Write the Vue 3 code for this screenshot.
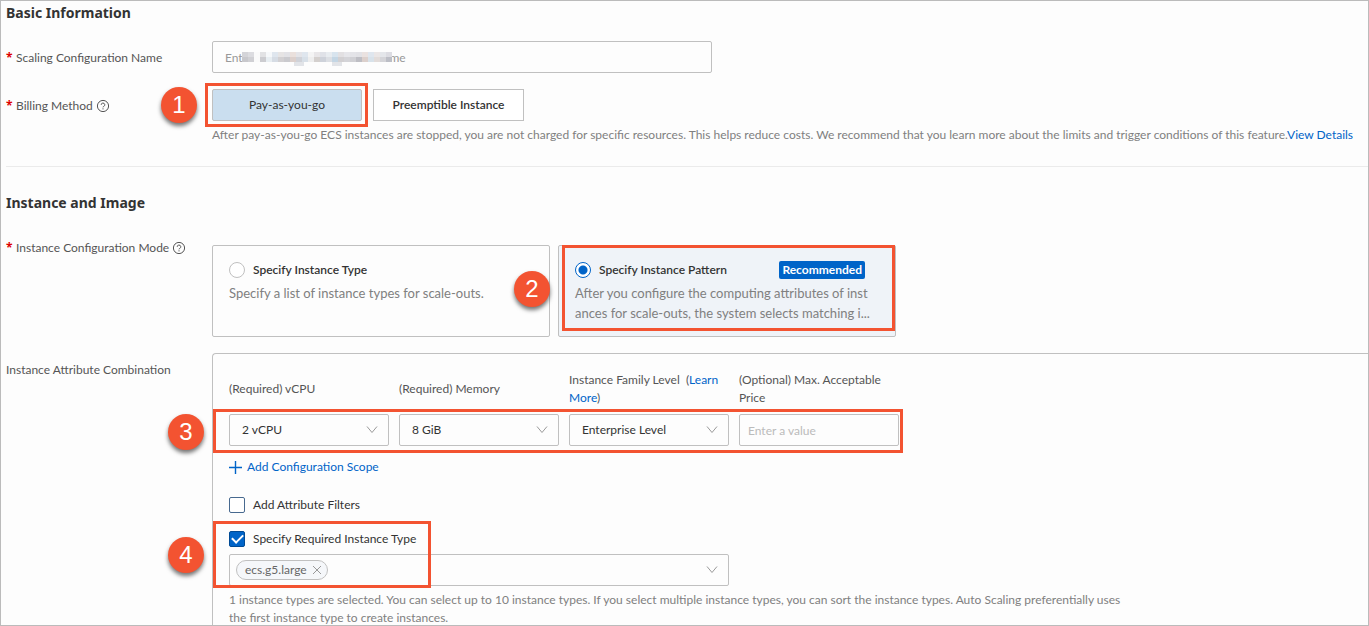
<script setup>
import { ref } from 'vue'

const name = ref('')
const mode = ref('pattern')
const vcpu = ref('2 vCPU')
const memory = ref('8 GiB')
const family = ref('Enterprise Level')
const price = ref('')
const filters = ref(false)
const required = ref(true)

const tones = [
  ['#d4d4d8', '#dcdce0', '#fafafa', '#e2e2e4', '#f6f8fa', '#dfe6ee', '#e6e4e4', '#e2e2e6', '#eae0dc', '#e4e4e8', '#dfe6ee', '#f4f4f4', '#e8e6e8', '#e0e2e8', '#e8ecf0', '#d8e4ee', '#e2e0e2', '#e6e6ea', '#e4e4e8', '#e2e2e6', '#eae2e0', '#dfe6ee', '#eae6e6', '#e4e6ea', '#dcdce2'],
  ['#c8c8cc', '#d0d0d4', '#fafafa', '#ccccd0', '#e8eef2', '#d6dce4', '#d2d0d2', '#cacace', '#dcd0cc', '#d0d2d8', '#d8e0e8', '#eeeeee', '#d4d0ce', '#ced2da', '#dcdfe4', '#c4d6e4', '#d2d0d2', '#d4d4d8', '#d0d0d4', '#bebec4', '#dcd0cc', '#d8e2ea', '#e2dcda', '#d4d4d8', '#bcbec6'],
]
const tails = [52, 57, 90, 95]
</script>

<template>
  <main class="page">
    <section class="section first">
      <h2>Basic Information</h2>

      <div class="row name-row">
        <label class="label" for="cfg-name"><span class="star">*</span>Scaling Configuration Name</label>
        <div class="name-wrap">
          <input id="cfg-name" v-model="name" class="box name-input" type="text" placeholder="Enter a scaling configuration name" />
          <svg class="mosaic" width="150" height="15" viewBox="0 0 150 15" aria-hidden="true">
            <rect width="150" height="15" fill="#fdfdfd" />
            <template v-for="(line, r) in tones" :key="r">
              <rect v-for="(c, i) in line" :key="i" :x="i * 6" :y="r * 5" width="6" height="5" :fill="c" />
            </template>
            <rect v-for="t in tails" :key="t" :x="t" y="10" width="5" height="4" fill="#e2e4e8" />
          </svg>
        </div>
      </div>

      <div class="row billing-row">
        <div class="label">
          <span class="star">*</span>Billing Method
          <svg class="help" width="12" height="12" viewBox="0 0 12 12" aria-hidden="true">
            <circle cx="6" cy="6" r="5.6" /><path d="M4.2 4.8a1.8 1.7 0 1 1 2.6 1.5Q6 6.7 6 7.3M6 8.3v1.1" />
          </svg>
        </div>
        <div>
          <div class="buttons">
            <div class="anchor">
              <button class="choice active" type="button">Pay-as-you-go</button>
              <span class="mark mark-1"></span><span class="badge badge-1">1</span>
            </div>
            <button class="choice" type="button">Preemptible Instance</button>
          </div>
          <p class="hint one-line">After pay-as-you-go ECS instances are stopped, you are not charged for specific resources. This helps reduce costs. We recommend that you learn more about the limits and trigger conditions of this feature.<a href="#">View Details</a></p>
        </div>
      </div>
    </section>

    <section class="section second">
      <h2>Instance and Image</h2>

      <div class="row cards-row">
        <div class="label mode-label">
          <span class="star">*</span>Instance Configuration Mode
          <svg class="help" width="12" height="12" viewBox="0 0 12 12" aria-hidden="true">
            <circle cx="6" cy="6" r="5.6" /><path d="M4.2 4.8a1.8 1.7 0 1 1 2.6 1.5Q6 6.7 6 7.3M6 8.3v1.1" />
          </svg>
        </div>
        <div class="cards">
          <div class="card">
            <label class="check"><input v-model="mode" type="radio" name="mode" value="type" /><span class="strong">Specify Instance Type</span></label>
            <p>Specify a list of instance types for scale-outs.</p>
            <span class="badge badge-2">2</span>
          </div>
          <div class="card selected">
            <div class="card-head">
              <label class="check"><input v-model="mode" type="radio" name="mode" value="pattern" /><span class="strong">Specify Instance Pattern</span></label>
              <span class="tag">Recommended</span>
            </div>
            <p>After you configure the computing attributes of inst<br />ances for scale-outs, the system selects matching i...</p>
            <span class="mark mark-2"></span>
          </div>
        </div>
      </div>

      <div class="row panel-row">
        <div class="label">Instance Attribute Combination</div>
        <div class="panel">
          <div class="fields">
            <div class="field">
              <label class="caption" for="vcpu">(Required) vCPU</label>
              <div class="select">
                <select id="vcpu" v-model="vcpu" class="box"><option>2 vCPU</option></select>
                <svg class="chev" width="12" height="8" viewBox="0 0 12 8" aria-hidden="true"><path d="M1 .5l5 6 5-6" /></svg>
              </div>
            </div>
            <div class="field">
              <label class="caption" for="memory">(Required) Memory</label>
              <div class="select">
                <select id="memory" v-model="memory" class="box"><option>8 GiB</option></select>
                <svg class="chev" width="12" height="8" viewBox="0 0 12 8" aria-hidden="true"><path d="M1 .5l5 6 5-6" /></svg>
              </div>
            </div>
            <div class="field">
              <div class="caption"><label for="family">Instance Family Level</label>&nbsp; (<a href="#">Learn More</a>)</div>
              <div class="select">
                <select id="family" v-model="family" class="box"><option>Enterprise Level</option></select>
                <svg class="chev" width="12" height="8" viewBox="0 0 12 8" aria-hidden="true"><path d="M1 .5l5 6 5-6" /></svg>
              </div>
            </div>
            <div class="field">
              <label class="caption" for="price">(Optional) Max. Acceptable Price</label>
              <input id="price" v-model="price" class="box price" type="text" placeholder="Enter a value" />
            </div>
            <span class="mark mark-3"></span><span class="badge badge-3">3</span>
          </div>

          <button class="add" type="button">
            <svg width="13" height="13" viewBox="0 0 13 13" aria-hidden="true"><path d="M6.5 0v13M0 6.5h13" /></svg>Add Configuration Scope
          </button>

          <label class="check filters"><input v-model="filters" type="checkbox" />Add Attribute Filters</label>

          <div class="required">
            <label class="check"><input v-model="required" type="checkbox" />Specify Required Instance Type</label>
            <div class="box multi">
              <span class="chip">ecs.g5.large
                <button type="button" aria-label="Remove ecs.g5.large">
                  <svg width="10" height="10" viewBox="0 0 10 10" aria-hidden="true"><path d="M1 1l8 8M9 1l-8 8" /></svg>
                </button>
              </span>
              <svg class="chev" width="12" height="8" viewBox="0 0 12 8" aria-hidden="true"><path d="M1 .5l5 6 5-6" /></svg>
            </div>
            <span class="mark mark-4"></span><span class="badge badge-4">4</span>
          </div>
          <p class="hint note">1 instance types are selected. You can select up to 10 instance types. If you select multiple instance types, you can sort the instance types. Auto Scaling preferentially uses the first instance type to create instances.</p>
        </div>
      </div>
    </section>
  </main>
</template>

<style>
body { background: #fdfdfd; }
</style>

<style scoped>
.page {
  box-sizing: border-box;
  height: 100vh;
  display: flex;
  flex-direction: column;
  overflow: hidden;
  padding-left: 5px;
  border: 1px solid #bbb;
  color: #555;
  font: 12px/18px Lato, "Open Sans", sans-serif;
}
.page * { box-sizing: border-box; }
h2 { margin: 0; color: #333; font: bold 14px/24px "Noto Sans", sans-serif; }
p { margin: 0; }
a { color: #0064c8; text-decoration: none; }
button, input, select { font: inherit; }
.first { flex: none; height: 166px; border-bottom: 1px solid #ebebeb; }
.second { flex: 1; display: flex; flex-direction: column; padding-top: 24px; }
.row { display: grid; grid-template-columns: 206px minmax(0, 1fr); }
.label { white-space: nowrap; line-height: 34px; }
.star { display: inline-block; width: 10px; color: #d00; font-family: "Open Sans", sans-serif; font-weight: bold; line-height: 18px; }
.help { margin-left: 1px; vertical-align: -2px; overflow: visible; fill: none; stroke: #555; stroke-width: 1; }
.box {
  width: 100%;
  height: 32px;
  border: 1px solid #c0c0c0;
  border-radius: 2px;
  background: transparent;
  color: #333;
  outline: 0;
}
.name-row { height: 32px; margin-top: 16px; }
.name-wrap { position: relative; max-width: 500px; }
.name-input { padding: 0 12px; }
.box::placeholder { color: #999; opacity: 1; }
.price::placeholder { color: #bbb; }
.mosaic { position: absolute; left: 30px; top: 11px; }
.billing-row { margin-top: 16px; }
.buttons { display: flex; gap: 11px; }
.anchor { position: relative; }
.choice { width: 151px; height: 32px; padding: 0; border: 1px solid #c0c0c0; background: #fff; color: #333; font-weight: 600; }
.choice.active { display: block; width: 150px; background: #cadeef; font-weight: 400; border-radius: 2px; }
.hint { color: #808080; }
.one-line { margin-top: 5px; white-space: nowrap; }
.mark { position: absolute; border: 3px solid #f35331; pointer-events: none; z-index: 1; }
.badge {
  position: absolute;
  width: 36px;
  height: 36px;
  border-radius: 50%;
  background: #f35331;
  box-shadow: 0 3px 4px rgba(0, 0, 0, .55);
  color: #fff;
  font: 24px/36px "Liberation Sans", Arial, sans-serif;
  text-align: center;
  z-index: 2;
}
.mark-1 { inset: -6px -6px -6px -7px; }
.badge-1 { left: -51px; top: -2px; }
.mode-label { align-self: start; line-height: 24px; margin-top: -9px; }
.cards-row { margin-top: 30px; }
.cards { display: flex; gap: 8px; }
.card { position: relative; width: 338px; height: 92px; padding: 15px 16px; border: 1px solid #c0c0c0; border-radius: 2px; }
.card.selected { background: #eff3f8; }
.card p { margin-top: 4px; color: #808080; font-size: 13px; line-height: 20px; white-space: nowrap; }
.card .strong { color: #333; font-weight: 600; }
.card-head { display: flex; justify-content: space-between; padding-right: 14px; }
.tag { height: 18px; padding: 0 3px; border-radius: 2px; background: #0064c8; color: #fff; font-weight: bold; }
.mark-2 { inset: -1px 0 5px 3px; }
.badge-2 { right: -1px; top: 25px; }
.check { display: flex; align-items: center; gap: 8px; color: #333; }
.check input { appearance: none; flex: none; width: 16px; height: 16px; margin: 0; border: 1px solid #c0c0c0; background: #fff; }
.check input[type="radio"] { border-radius: 50%; }
.check input[type="radio"]:checked { border-color: #0064c8; background: radial-gradient(circle, #0064c8 4px, #fff 5px); }
.check input[type="checkbox"] { border-color: #47698f; border-radius: 2px; }
.check input[type="checkbox"]:checked {
  border-color: #004a94;
  background: #0064c8;
  display: grid;
  place-items: center;
}
.check input[type="checkbox"]:checked::before {
  content: "";
  width: 9px;
  height: 5px;
  margin-bottom: 3px;
  border: solid #fff;
  border-width: 0 0 2px 2px;
  transform: rotate(-45deg);
}
.panel-row { flex: 1; margin-top: 16px; }
.panel { border: solid #c0c0c0; border-width: 1px 0 0 1px; border-radius: 4px 0 0 0; padding: 17px 16px 0; }
.fields { position: relative; display: grid; grid-template-columns: repeat(4, 160px); gap: 10px; width: 670px; }
.caption { display: block; height: 36px; margin-bottom: 7px; align-content: center; }
.field .box { padding: 0 12px; }
.field .price { padding: 0 8px; }
.select { position: relative; height: 32px; }
.select select { display: block; appearance: none; }
.chev, .add svg, .chip svg { fill: none; stroke: #999; stroke-width: 1; }
.select .chev { position: absolute; right: 11px; top: 12px; pointer-events: none; }
.mark-3 { inset: 38px -4px -7px -16px; }
.badge-3 { left: -61px; top: 43px; }
.add { display: flex; align-items: center; gap: 5px; margin: 12px 0 0; padding: 0; border: 0; background: none; color: #0064c8; }
.add svg { stroke: #0064c8; stroke-width: 1.4; }
.filters { margin-top: 20px; }
.required { position: relative; margin-top: 16px; }
.multi { display: flex; align-items: center; justify-content: space-between; width: 500px; margin-top: 6px; padding: 0 10px 0 6px; }
.chip { display: inline-flex; align-items: center; gap: 5px; height: 20px; padding: 0 5px 0 8px; border: 1px solid #c0c0c0; border-radius: 10px; background: #f5f7fa; color: #666; }
.chip button { display: flex; padding: 0; border: 0; background: none; }
.mark-4 { left: -16px; top: -9px; width: 218px; height: 67px; }
.badge-4 { left: -61px; top: 7px; }
.note { max-width: 900px; margin-top: 5px; }
</style>
